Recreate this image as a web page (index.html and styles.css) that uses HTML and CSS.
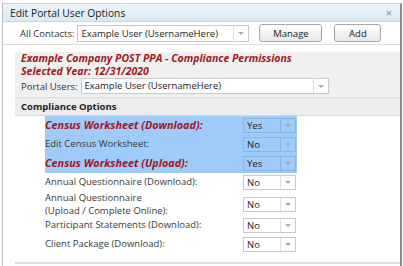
FILE: index.html
```html
<!DOCTYPE html>
<html lang="en">
<head>
    <meta charset="UTF-8">
    <meta name="viewport" content="width=device-width, initial-scale=1.0">
    <title>Edit Portal User Options</title>
    <link rel="stylesheet" href="styles.css">
</head>
<body>
    <div class="window">
        <!-- Title bar -->
        <div class="titlebar">
            <span class="title">Edit Portal User Options</span>
            <span class="close">&times;</span>
        </div>

        <!-- Contact picker -->
        <div class="toolbar">
            <label class="field-label">All Contacts:</label>
            <div class="select contacts">
                <span class="value">Example User (UsernameHere)</span>
                <span class="arrow"></span>
            </div>
            <button class="btn manage">Manage</button>
            <button class="btn add">Add</button>
        </div>

        <div class="content">
            <div class="company">
                <div class="company-title">
                    Example Company POST PPA - Compliance Permissions<br>
                    Selected Year: 12/31/2020
                </div>
                <div class="portal-row">
                    <label class="field-label">Portal Users:</label>
                    <div class="select portal">
                        <span class="value">Example User (UsernameHere)</span>
                        <span class="arrow"></span>
                    </div>
                </div>
            </div>

            <div class="section-header">Compliance Options</div>

            <div class="options">
                <div class="opt on">
                    <label class="red">Census Worksheet (Download):</label>
                    <div class="select small"><span class="value">Yes</span><span class="arrow"></span></div>
                </div>
                <div class="opt on">
                    <label>Edit Census Worksheet:</label>
                    <div class="select small"><span class="value">No</span><span class="arrow"></span></div>
                </div>
                <div class="opt on">
                    <label class="red">Census Worksheet (Upload):</label>
                    <div class="select small"><span class="value">Yes</span><span class="arrow"></span></div>
                </div>
                <div class="opt">
                    <label>Annual Questionnaire (Download):</label>
                    <div class="select small"><span class="value">No</span><span class="arrow"></span></div>
                </div>
                <div class="opt tall">
                    <label>Annual Questionnaire<br>(Upload / Complete Online):</label>
                    <div class="select small"><span class="value">No</span><span class="arrow"></span></div>
                </div>
                <div class="opt">
                    <label>Participant Statements (Download):</label>
                    <div class="select small"><span class="value">No</span><span class="arrow"></span></div>
                </div>
                <div class="opt">
                    <label>Client Package (Download):</label>
                    <div class="select small"><span class="value">No</span><span class="arrow"></span></div>
                </div>
            </div>

            <div class="footer-line"></div>
        </div>
    </div>
</body>
</html>
```

FILE: styles.css
```css
body {
    margin: 0;
    font-family: "Open Sans", sans-serif;
    font-size: 9.5px;
    color: #3a3a3a;
    background: #fff;
}
.window {
    margin: 3px 0 0 2px;
    width: 400px;
    height: 263px;
    box-sizing: border-box;
    border-top: 1px solid #c3d3de;
    border-left: 1px solid #bdbdbd;
    border-right: 2px solid #8c8c8c;
    overflow: hidden;
}
.titlebar {
    height: 17px;
    display: flex;
    align-items: center;
    justify-content: space-between;
    padding: 0 8px 0 7px;
    background: linear-gradient(#ecf5fa, #d9eaf3);
    border-bottom: 1px solid #c4d6e1;
    font-size: 10.3px;
    color: #222;
}
.close {
    color: #8a8a8a;
    font-size: 11px;
}
.toolbar {
    height: 22px;
    display: flex;
    align-items: center;
    padding-left: 17px;
    border-bottom: 1px solid #dedede;
}
.field-label {
    margin-right: 3px;
    color: #333;
}
.select {
    display: flex;
    box-sizing: border-box;
    border: 1px solid #c9c9c9;
    background: #fff;
    color: #222;
}
.select .value {
    flex: 1;
    padding-left: 3px;
    white-space: nowrap;
    overflow: hidden;
}
.select .arrow {
    width: 14px;
    border-left: 1px solid #e0e0e0;
    display: flex;
    align-items: center;
    justify-content: center;
}
.select .arrow::after {
    content: "";
    border-left: 3px solid transparent;
    border-right: 3px solid transparent;
    border-top: 3px solid #a8a8a8;
}
.select.contacts {
    width: 172px;
    height: 17px;
    line-height: 15px;
}
.btn {
    height: 18px;
    padding: 0;
    font-family: "Open Sans", sans-serif;
    font-size: 9.5px;
    color: #222;
    border: 1px solid #a8a8a8;
    border-radius: 3px;
    background: linear-gradient(#fdfdfd, #e8e8e8);
}
.btn.manage {
    width: 63px;
    margin-left: 10px;
}
.btn.add {
    width: 47px;
    margin-left: 12px;
}
.content {
    padding: 7px 0 0 12px;
}
.company {
    background: #f0f0f0;
    padding: 0 0 3px 6px;
    border-bottom: 1px solid #d6dde5;
}
.company-title {
    color: #a3161b;
    font-weight: bold;
    font-style: italic;
    font-size: 10.5px;
    line-height: 13px;
}
.portal-row {
    display: flex;
    align-items: center;
    height: 16px;
}
.select.portal {
    width: 248px;
    height: 16px;
    line-height: 14px;
}
.section-header {
    height: 17px;
    line-height: 17px;
    padding-left: 6px;
    background: #ececec;
    border-bottom: 1px solid #d8d8d8;
    font-weight: bold;
    color: #222;
}
.options {
    margin-left: 30px;
    width: 252px;
}
.opt {
    display: grid;
    grid-template-columns: 198px 54px;
    align-items: center;
    height: 19px;
}
.opt label {
    line-height: 12.5px;
}
.opt.tall {
    height: 24px;
}
.opt.on {
    background: #9fcbfb;
}
.opt .red {
    color: #a3161b;
    font-weight: bold;
    font-style: italic;
    font-size: 10.8px;
}
.select.small {
    width: 53px;
    height: 15px;
    line-height: 13px;
}
.opt.on .select {
    background: transparent;
    border-color: #87b4e0;
}
.opt.on .select .arrow {
    border-left-color: #87b4e0;
}
.footer-line {
    margin-top: 8px;
    height: 2px;
    background: #d6dee9;
}
```
